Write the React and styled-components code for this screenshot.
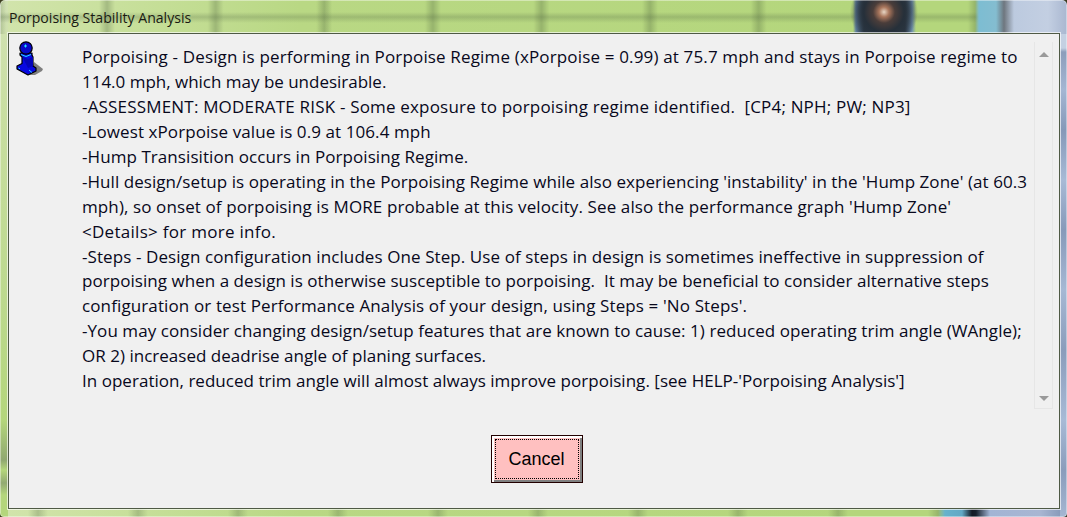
import React from "react";
import styled, { createGlobalStyle } from "styled-components";

const Global = createGlobalStyle`
  html, body { margin: 0; padding: 0; background: #3c3c20; }
`;

const Frame = styled.div`
  width: 1067px;
  height: 517px;
  box-sizing: border-box;
  padding: 0 7px 8px 8px;
  display: flex;
  flex-direction: column;
  overflow: hidden;
  font-family: "Open Sans", "Liberation Sans", sans-serif;
  border-radius: 5px 5px 4px 4px;
  box-shadow: inset 0 0 0 1px rgba(255,255,255,0.4);
  background-color: #b4d67c;
  background-image:
    radial-gradient(circle at 884px 12px, #e8d6c4 0, #a9765c 5px, #4a3d3a 11px, #26303a 20px, rgba(38,48,58,0) 34px),
    linear-gradient(90deg, rgba(0,0,0,0) 853px, #5f7f9e 856px, #2c3844 864px, #2c3844 905px, #6f90ae 912px, rgba(0,0,0,0) 916px),
    linear-gradient(90deg, rgba(0,0,0,0) 975px, #7dbdd2 979px, #84bdd0 996px, #6e767e 1004px, #bccadf 1014px, #c3cfe2 1048px, #a9b7d0 1067px),
    linear-gradient(180deg, #c4d0e2 0, #c4d0e2 48px, #8c9dbb 52px, #a4b6d3 90px, #8598b8 130px, #a8bad6 180px, #8699b9 230px, #a6b8d4 290px, #8a9cbb 350px, #a8bad6 420px, #8a9cbb 470px, #a4b6d2 517px),
    linear-gradient(90deg, rgba(0,0,0,0) 938px, #66b2cc 945px, #62a8c4 962px, #141a24 972px, #16202c 976px, #a2b4d4 990px, #a8b6d2 1040px, #7f92b2 1067px),
    linear-gradient(180deg, rgba(70,90,60,0) 12px, rgba(70,90,60,0.24) 17px, rgba(70,90,60,0) 23px),
    linear-gradient(90deg, rgba(60,80,50,0) 46px, rgba(60,80,50,0.27) 54px, rgba(60,80,50,0) 62px),
    linear-gradient(90deg, rgba(60,80,50,0) 28px, rgba(60,80,50,0.24) 38px, rgba(60,80,50,0) 48px),
    linear-gradient(180deg, #d2e2b4 0, #c8dea0 120px, #bcd98e 300px, #b4d67c 420px, #90a870 460px, #b4d67c 470px, #92aa72 483px, #b4d67c 495px),
    linear-gradient(90deg, #d2e4ac 0, #c8e09c 120px, #b9d884 300px, #b4d67c 860px);
  background-size:
    100% 34px,
    100% 34px,
    100% 34px,
    7px 100%,
    100% 9px,
    100% 34px,
    108.6px 34px,
    100px 9px,
    8px 100%,
    100% 100%;
  background-position:
    0 0, 0 0, 0 0, right top, 0 100%, 0 0, 53px 0, 0 100%, 0 0, 0 0;
  background-repeat:
    no-repeat, no-repeat, no-repeat, no-repeat, no-repeat, no-repeat, repeat-x, repeat-x, no-repeat, no-repeat;
`;

const TitleBar = styled.div`
  height: 33px;
  flex: none;
  display: flex;
  align-items: center;
  padding: 2px 0 0 1px;
  box-sizing: border-box;
  font-size: 14.1px;
  color: #1a1a12;
  white-space: nowrap;
`;

const Client = styled.div`
  flex: 1;
  min-height: 0;
  box-sizing: border-box;
  background: #f0f0f0;
  border: 1px solid #4f5a45;
  box-shadow: 0 0 0 1px rgba(255,255,255,0.65);
  display: flex;
  flex-direction: column;
`;

const Content = styled.div`
  display: flex;
  height: 375px;
  box-sizing: border-box;
  flex: none;
`;

const IconCell = styled.div`
  width: 73px;
  flex: none;
  padding: 4px 0 0 3px;
  box-sizing: border-box;
`;

const Message = styled.div`
  flex: 1;
  min-width: 0;
  padding-top: 11px;
  font-size: 17px;
  line-height: 24.95px;
  color: #08081c;
`;

const Line = styled.div`
  white-space: pre;
  height: 24.95px;
  letter-spacing: ${(p) => p.$tracking}px;
`;

const ScrollBar = styled.div`
  width: 19px;
  flex: none;
  margin: 8px 6px 0 0;
  border-left: 1px solid #e6e6e6;
  border-right: 1px solid #e6e6e6;
  border-bottom: 1px solid #e6e6e6;
  box-sizing: border-box;
  display: flex;
  flex-direction: column;
  justify-content: space-between;
  align-items: center;
  padding: 10px 0 7px;
`;

const Arrow = styled.div`
  width: 0;
  height: 0;
  border-left: 5px solid transparent;
  border-right: 5px solid transparent;
  ${(p) => p.$down ? "border-top: 5px solid #9a9a9a;" : "border-bottom: 5px solid #9a9a9a;"}
`;

const ButtonRow = styled.div`
  flex: 1;
  display: flex;
  justify-content: center;
  padding: 26px 0 0 5px;
  box-sizing: border-box;
`;

const CancelButton = styled.button`
  width: 92px;
  height: 48px;
  box-sizing: border-box;
  padding: 0;
  background: #ffc0c0;
  border: 1px solid #000;
  outline: 1px solid #200;
  outline-offset: -1px;
  box-shadow: inset 1px 1px 0 #fff, inset 2px 2px 0 #fff, inset -1px -1px 0 #808080, inset -2px -2px 0 #808080;
  position: relative;
  font-family: "Liberation Sans", Arial, sans-serif;
  font-size: 18px;
  color: #000;
  &::after {
    content: "";
    position: absolute;
    inset: 3px;
    border: 1px dotted #000;
  }
`;

const lines = [
  ["Porpoising - Design is performing in Porpoise Regime (xPorpoise = 0.99) at 75.7 mph and stays in Porpoise regime to", 0.155],
  ["114.0 mph, which may be undesirable.", -0.012],
  ["-ASSESSMENT: MODERATE RISK - Some exposure to porpoising regime identified.  [CP4; NPH; PW; NP3]", 0.185],
  ["-Lowest xPorpoise value is 0.9 at 106.4 mph", 0.085],
  ["-Hump Transisition occurs in Porpoising Regime.", 0.07],
  ["-Hull design/setup is operating in the Porpoising Regime while also experiencing 'instability' in the 'Hump Zone' (at 60.3", 0.055],
  ["mph), so onset of porpoising is MORE probable at this velocity. See also the performance graph 'Hump Zone'", 0.108],
  ["<Details> for more info.", 0.28],
  ["-Steps - Design configuration includes One Step. Use of steps in design is sometimes ineffective in suppression of", 0.085],
  ["porpoising when a design is otherwise susceptible to porpoising.  It may be beneficial to consider alternative steps", 0.045],
  ["configuration or test Performance Analysis of your design, using Steps = 'No Steps'.", 0.119],
  ["-You may consider changing design/setup features that are known to cause: 1) reduced operating trim angle (WAngle);", 0.059],
  ["OR 2) increased deadrise angle of planing surfaces.", 0.018],
  ["In operation, reduced trim angle will almost always improve porpoising. [see HELP-'Porpoising Analysis']", 0.029],
];

const InfoIcon = () => (
  <svg width="36" height="42" viewBox="0 0 36 42" style={{ display: "block" }}>
    <path d="M22 24 L31 31 L30 33 L23 37 L18 37 Z" fill="#7f7f7f" />
    <path
      d="M5 28 L10 25.5 L10 19 L8 17 L8 15 L20 15 L20 17 L21 19 L21 28 L24 30 L24 33 L16 37 L5 31 Z"
      fill="#0808e0"
      stroke="#000"
      strokeWidth="1.2"
      strokeLinejoin="round"
    />
    <path d="M10.5 19 L16 21 L21 19 L21 28 L16 30 Z" fill="#0404b8" />
    <circle cx="14" cy="10" r="6.2" fill="#0808c8" stroke="#000" strokeWidth="1.2" />
    <path d="M13.5 6.5v3M12 8h3M9 16.5 L14 18.5 L19 16.5M17 32l3 2.5M6.5 30l1.5 .8" stroke="#20e0ff" strokeWidth="1" fill="none" />
  </svg>
);

export default function App() {
  return (
    <Frame>
      <Global />
      <TitleBar>Porpoising Stability Analysis</TitleBar>
      <Client>
        <Content>
          <IconCell><InfoIcon /></IconCell>
          <Message>
            {lines.map(([text, tracking]) => <Line key={text} $tracking={tracking}>{text}</Line>)}
          </Message>
          <ScrollBar>
            <Arrow />
            <Arrow $down />
          </ScrollBar>
        </Content>
        <ButtonRow>
          <CancelButton>Cancel</CancelButton>
        </ButtonRow>
      </Client>
    </Frame>
  );
}
